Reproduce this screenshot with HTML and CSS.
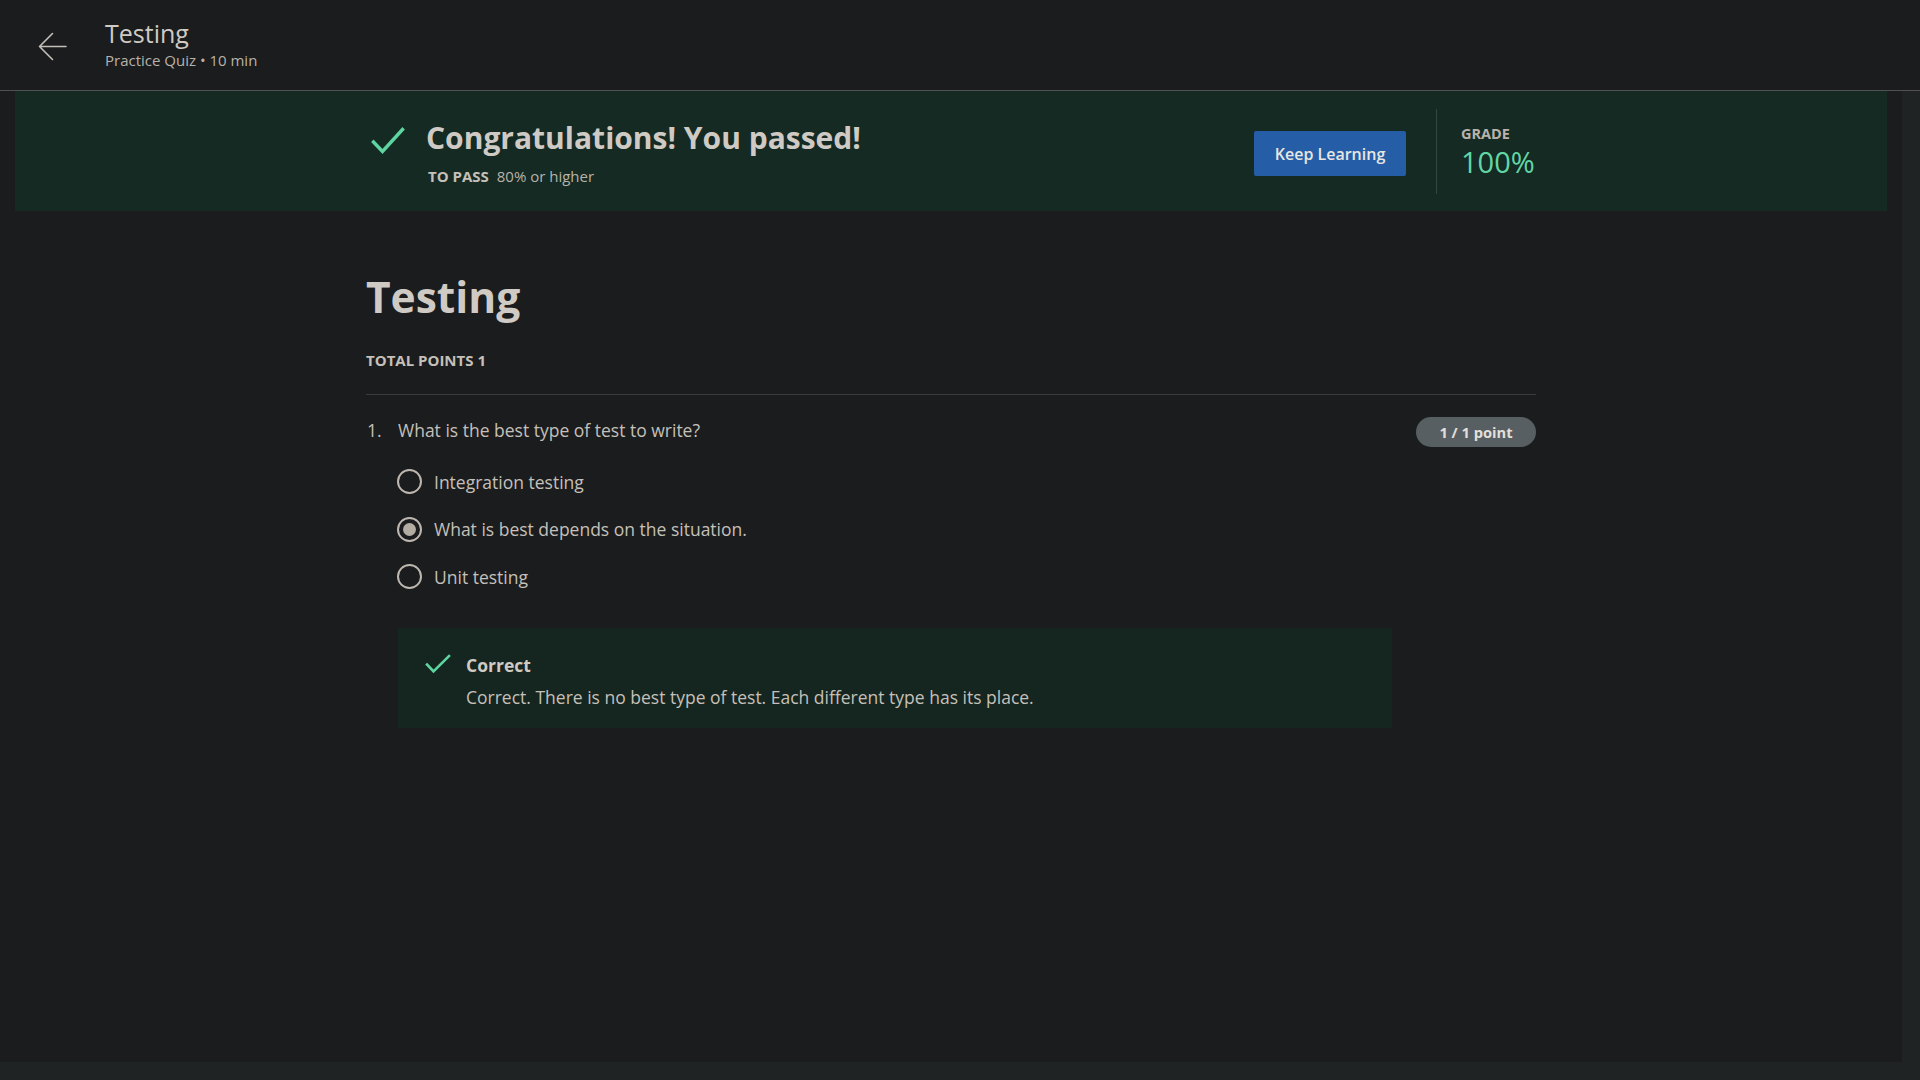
FILE: index.html
```html
<!DOCTYPE html>
<html lang="en">
<head>
<meta charset="utf-8">
<title>Testing | Practice Quiz</title>
<link rel="stylesheet" href="styles.css">
</head>
<body>
<header class="topbar">
  <button class="back" aria-label="Back">
    <svg width="29" height="29" viewBox="0 0 29 29" fill="none" stroke="currentColor" stroke-width="1.6" stroke-linecap="round" stroke-linejoin="round"><path d="M28 14.5H1.5M14.5 1.5L1.5 14.5L14.5 27.5"/></svg>
  </button>
  <div class="topbar-text">
    <div class="topbar-title">Testing</div>
    <div class="topbar-sub">Practice Quiz • 10 min</div>
  </div>
</header>
<div class="viewport">
  <main class="scroll">
    <section class="banner">
      <div class="banner-inner">
        <div class="passed">
          <svg class="passed-check" width="34" height="28" viewBox="0 0 34 28" fill="none" stroke="currentColor" stroke-width="3.4" stroke-linecap="square"><path d="M2.5 15L11.5 24.5L31.5 2.5"/></svg>
          <div class="passed-text">
            <h2 class="passed-title">Congratulations! You passed!</h2>
            <div class="passed-req"><span class="req-label">TO PASS</span> 80% or higher</div>
          </div>
        </div>
        <div class="banner-right">
          <button class="btn-primary">Keep Learning</button>
          <div class="vdivider"></div>
          <div class="grade">
            <div class="grade-label">GRADE</div>
            <div class="grade-value">100%</div>
          </div>
        </div>
      </div>
    </section>
    <section class="content">
      <h1 class="quiz-title">Testing</h1>
      <div class="total-points">TOTAL POINTS 1</div>
      <div class="question">
        <div class="q-num">1.</div>
        <div class="q-body">
          <div class="q-text">What is the best type of test to write?</div>
          <div class="options">
            <label class="option"><span class="radio"></span><span>Integration testing</span></label>
            <label class="option"><span class="radio checked"></span><span>What is best depends on the situation.</span></label>
            <label class="option"><span class="radio"></span><span>Unit testing</span></label>
          </div>
          <div class="feedback">
            <svg class="fb-check" width="26" height="20" viewBox="0 0 26 20" fill="none" stroke="currentColor" stroke-width="2.6" stroke-linecap="square"><path d="M2 10.5L8.5 17.5L24 2"/></svg>
            <div class="fb-text">
              <div class="fb-title">Correct</div>
              <div class="fb-body">Correct. There is no best type of test. Each different type has its place.</div>
            </div>
          </div>
        </div>
        <div class="points-badge">1 / 1 point</div>
      </div>
    </section>
  </main>
  <div class="vtrack"></div>
</div>
<div class="htrack"></div>
</body>
</html>
```

FILE: styles.css
```css
* { box-sizing: border-box; }
html, body { margin: 0; padding: 0; }
body {
  width: 1920px;
  height: 1080px;
  overflow: hidden;
  background: #1b1c1e;
  font-family: "Open Sans", "Noto Sans", sans-serif;
  color: #cfcac3;
}

.topbar {
  height: 91px;
  border-bottom: 1px solid #515151;
  background: #1b1c1e;
  display: flex;
  align-items: center;
  padding-left: 38px;
}
.back {
  background: none;
  border: 0;
  padding: 0;
  width: 29px;
  height: 29px;
  color: #c3beb7;
  display: flex;
  margin-top: 2px;
}
.topbar-text { margin-left: 38px; margin-top: -3px; }
.topbar-title { font-size: 25px; line-height: 31px; color: #cfcac3; }
.topbar-sub { font-size: 15px; line-height: 20px; color: #b8b2aa; margin-top: 1px; }

.viewport { display: flex; height: 971px; }
.scroll { flex: 1; background: #1b1c1e; overflow: hidden; }
.vtrack { width: 18px; background: #202324; }
.htrack { height: 18px; background: #202324; }

.banner {
  margin: 0 15px;
  height: 120px;
  background: #142a23;
}
.banner-inner {
  width: 1170px;
  margin: 0 auto;
  height: 100%;
  display: flex;
  justify-content: space-between;
}
.passed { display: flex; padding-top: 27px; padding-left: 5px; }
.passed-check { color: #5ed5a0; margin-top: 9px; flex: none; }
.passed-text { margin-left: 21px; }
.passed-title {
  margin: 0;
  font-size: 30px;
  line-height: 40px;
  font-weight: 700;
  color: #cfcac3;
}
.passed-req { margin-top: 8px; font-size: 15px; line-height: 20px; color: #b8b2aa; padding-left: 2px; }
.req-label { font-weight: 700; color: #c5c0b9; margin-right: 4px; }

.banner-right { display: flex; align-items: center; }
.btn-primary {
  width: 152px;
  height: 45px;
  margin-top: 5px;
  background: #255ea7;
  color: #e8e6e3;
  border: 0;
  border-radius: 2px;
  font-family: inherit;
  font-size: 16px;
  font-weight: 600;
}
.vdivider { width: 1px; height: 85px; background: #33463f; margin: 0 24px 0 30px; }
.grade { width: 75px; margin-top: 2px; }
.grade-label { font-size: 14.5px; line-height: 18px; font-weight: 700; color: #b8b2aa; }
.grade-value { font-size: 29px; line-height: 36px; color: #62d6a6; margin-top: 1px; }

.content { width: 1170px; margin: 0 auto; padding-top: 58px; }
.quiz-title { margin: 0; font-size: 42.5px; line-height: 56px; font-weight: 700; color: #cfcac3; }
.total-points {
  margin-top: 25px;
  font-size: 15px;
  line-height: 20px;
  font-weight: 700;
  color: #c5c0b9;
  padding-bottom: 24px;
  border-bottom: 1px solid #3b3c3e;
}
.question { display: flex; padding-top: 23px; }
.q-num { width: 32px; flex: none; font-size: 17.5px; line-height: 24px; color: #c5c0b9; padding-left: 1px; }
.q-body { width: 994px; flex: none; }
.q-text { font-size: 17.5px; line-height: 24px; color: #c5c0b9; }
.options { margin-top: 16px; }
.option {
  display: flex;
  align-items: center;
  height: 47.5px;
  font-size: 17.5px;
  color: #c5c0b9;
}
.radio {
  width: 25px;
  height: 25px;
  border: 2px solid #bdb7af;
  border-radius: 50%;
  margin-left: -1px;
  margin-right: 12px;
  flex: none;
  display: flex;
  align-items: center;
  justify-content: center;
}
.radio.checked::after {
  content: "";
  width: 13px;
  height: 13px;
  border-radius: 50%;
  background: #b3aca3;
}
.feedback {
  margin-top: 27.5px;
  height: 100px;
  background: #15251f;
  display: flex;
  padding: 25px 0 0 27px;
}
.fb-check { color: #5ed5a0; flex: none; margin-top: 1px; }
.fb-text { margin-left: 15px; }
.fb-title { font-size: 17.5px; line-height: 24px; font-weight: 700; color: #cfcac3; }
.fb-body { margin-top: 8px; font-size: 17.5px; line-height: 24px; color: #c5c0b9; }

.points-badge {
  margin-left: 24px;
  margin-top: -1px;
  width: 120px;
  height: 30px;
  border-radius: 15px;
  background: #585f62;
  color: #e2dfda;
  font-size: 14.7px;
  font-weight: 700;
  display: flex;
  align-items: center;
  justify-content: center;
  flex: none;
}
```
